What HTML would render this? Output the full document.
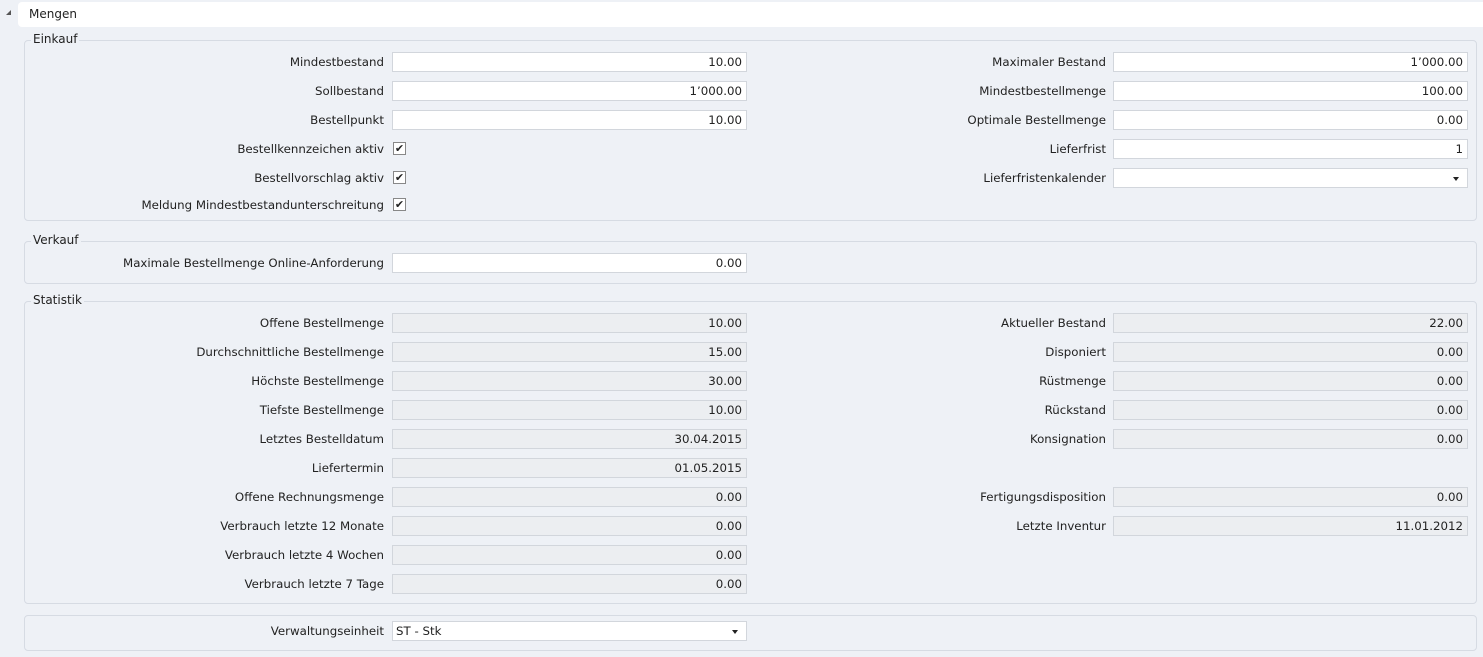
<!DOCTYPE html>
<html><head><meta charset="utf-8"><style>
body{margin:0;width:1483px;height:657px;background:#eef1f6;font-family:"DejaVu Sans","Liberation Sans",sans-serif;font-size:11.8px;color:#222;position:relative;overflow:hidden}
.a{position:absolute}
.hdr{left:18px;top:2px;width:1465px;height:25px;background:#fff;border-radius:4px 0 0 4px}
.fs{position:absolute;left:24px;width:1451px;border:1px solid #d6dbe3;border-radius:4px}
.lg{position:absolute;left:6px;top:-9px;background:#eef1f6;padding:0 2px;font-size:12px}
.l{position:absolute;width:380px;text-align:right;line-height:21px;white-space:nowrap}
.i{position:absolute;width:353px;height:18px;border:1px solid #d2d6dc;background:#fff;text-align:right;line-height:19px;padding:0;box-sizing:content-box}
.i span{padding-right:4px}
.g{background:#eceef1}
.c{position:absolute;width:11px;height:11px;border:1px solid #888;background:#fff;font-size:11px;line-height:11px;text-align:center}
.dd{text-align:left}
.dd:after{content:"";position:absolute;right:8px;top:8px;border-left:3px solid transparent;border-right:3px solid transparent;border-top:4px solid #222}
</style></head><body>
<div class="a" style="left:6px;top:10px;width:0;height:0;border-left:5px solid transparent;border-bottom:5px solid #555"></div>
<div class="a hdr"></div>
<div class="a" style="left:29px;top:7px;font-size:12px">Mengen</div>

<div class="fs" style="top:40px;height:179px"><div class="lg">Einkauf</div></div>
<div class="l" style="left:4px;top:52px">Mindestbestand</div><div class="i" style="left:392px;top:52px"><span>10.00</span></div>
<div class="l" style="left:4px;top:81px">Sollbestand</div><div class="i" style="left:392px;top:81px"><span>1’000.00</span></div>
<div class="l" style="left:4px;top:110px">Bestellpunkt</div><div class="i" style="left:392px;top:110px"><span>10.00</span></div>
<div class="l" style="left:4px;top:139px">Bestellkennzeichen aktiv</div><div class="c" style="left:393px;top:142px">✔</div>
<div class="l" style="left:4px;top:168px">Bestellvorschlag aktiv</div><div class="c" style="left:393px;top:171px">✔</div>
<div class="l" style="left:4px;top:195px">Meldung Mindestbestandunterschreitung</div><div class="c" style="left:393px;top:198px">✔</div>
<div class="l" style="left:726px;top:52px">Maximaler Bestand</div><div class="i" style="left:1113px;top:52px"><span>1’000.00</span></div>
<div class="l" style="left:726px;top:81px">Mindestbestellmenge</div><div class="i" style="left:1113px;top:81px"><span>100.00</span></div>
<div class="l" style="left:726px;top:110px">Optimale Bestellmenge</div><div class="i" style="left:1113px;top:110px"><span>0.00</span></div>
<div class="l" style="left:726px;top:139px">Lieferfrist</div><div class="i" style="left:1113px;top:139px"><span>1</span></div>
<div class="l" style="left:726px;top:168px">Lieferfristenkalender</div><div class="i dd" style="left:1113px;top:168px"></div>

<div class="fs" style="top:241px;height:41px"><div class="lg">Verkauf</div></div>
<div class="l" style="left:4px;top:253px">Maximale Bestellmenge Online-Anforderung</div><div class="i" style="left:392px;top:253px"><span>0.00</span></div>

<div class="fs" style="top:301px;height:301px"><div class="lg">Statistik</div></div>
<div class="l" style="left:4px;top:313px">Offene Bestellmenge</div><div class="i g" style="left:392px;top:313px"><span>10.00</span></div>
<div class="l" style="left:4px;top:342px">Durchschnittliche Bestellmenge</div><div class="i g" style="left:392px;top:342px"><span>15.00</span></div>
<div class="l" style="left:4px;top:371px">Höchste Bestellmenge</div><div class="i g" style="left:392px;top:371px"><span>30.00</span></div>
<div class="l" style="left:4px;top:400px">Tiefste Bestellmenge</div><div class="i g" style="left:392px;top:400px"><span>10.00</span></div>
<div class="l" style="left:4px;top:429px">Letztes Bestelldatum</div><div class="i g" style="left:392px;top:429px"><span>30.04.2015</span></div>
<div class="l" style="left:4px;top:458px">Liefertermin</div><div class="i g" style="left:392px;top:458px"><span>01.05.2015</span></div>
<div class="l" style="left:4px;top:487px">Offene Rechnungsmenge</div><div class="i g" style="left:392px;top:487px"><span>0.00</span></div>
<div class="l" style="left:4px;top:516px">Verbrauch letzte 12 Monate</div><div class="i g" style="left:392px;top:516px"><span>0.00</span></div>
<div class="l" style="left:4px;top:545px">Verbrauch letzte 4 Wochen</div><div class="i g" style="left:392px;top:545px"><span>0.00</span></div>
<div class="l" style="left:4px;top:574px">Verbrauch letzte 7 Tage</div><div class="i g" style="left:392px;top:574px"><span>0.00</span></div>
<div class="l" style="left:726px;top:313px">Aktueller Bestand</div><div class="i g" style="left:1113px;top:313px"><span>22.00</span></div>
<div class="l" style="left:726px;top:342px">Disponiert</div><div class="i g" style="left:1113px;top:342px"><span>0.00</span></div>
<div class="l" style="left:726px;top:371px">Rüstmenge</div><div class="i g" style="left:1113px;top:371px"><span>0.00</span></div>
<div class="l" style="left:726px;top:400px">Rückstand</div><div class="i g" style="left:1113px;top:400px"><span>0.00</span></div>
<div class="l" style="left:726px;top:429px">Konsignation</div><div class="i g" style="left:1113px;top:429px"><span>0.00</span></div>
<div class="l" style="left:726px;top:487px">Fertigungsdisposition</div><div class="i g" style="left:1113px;top:487px"><span>0.00</span></div>
<div class="l" style="left:726px;top:516px">Letzte Inventur</div><div class="i g" style="left:1113px;top:516px"><span>11.01.2012</span></div>

<div class="fs" style="top:615px;height:34px"></div>
<div class="l" style="left:4px;top:621px">Verwaltungseinheit</div><div class="i dd" style="left:392px;top:621px"><span style="padding-left:3px">ST - Stk</span></div>
</body></html>
